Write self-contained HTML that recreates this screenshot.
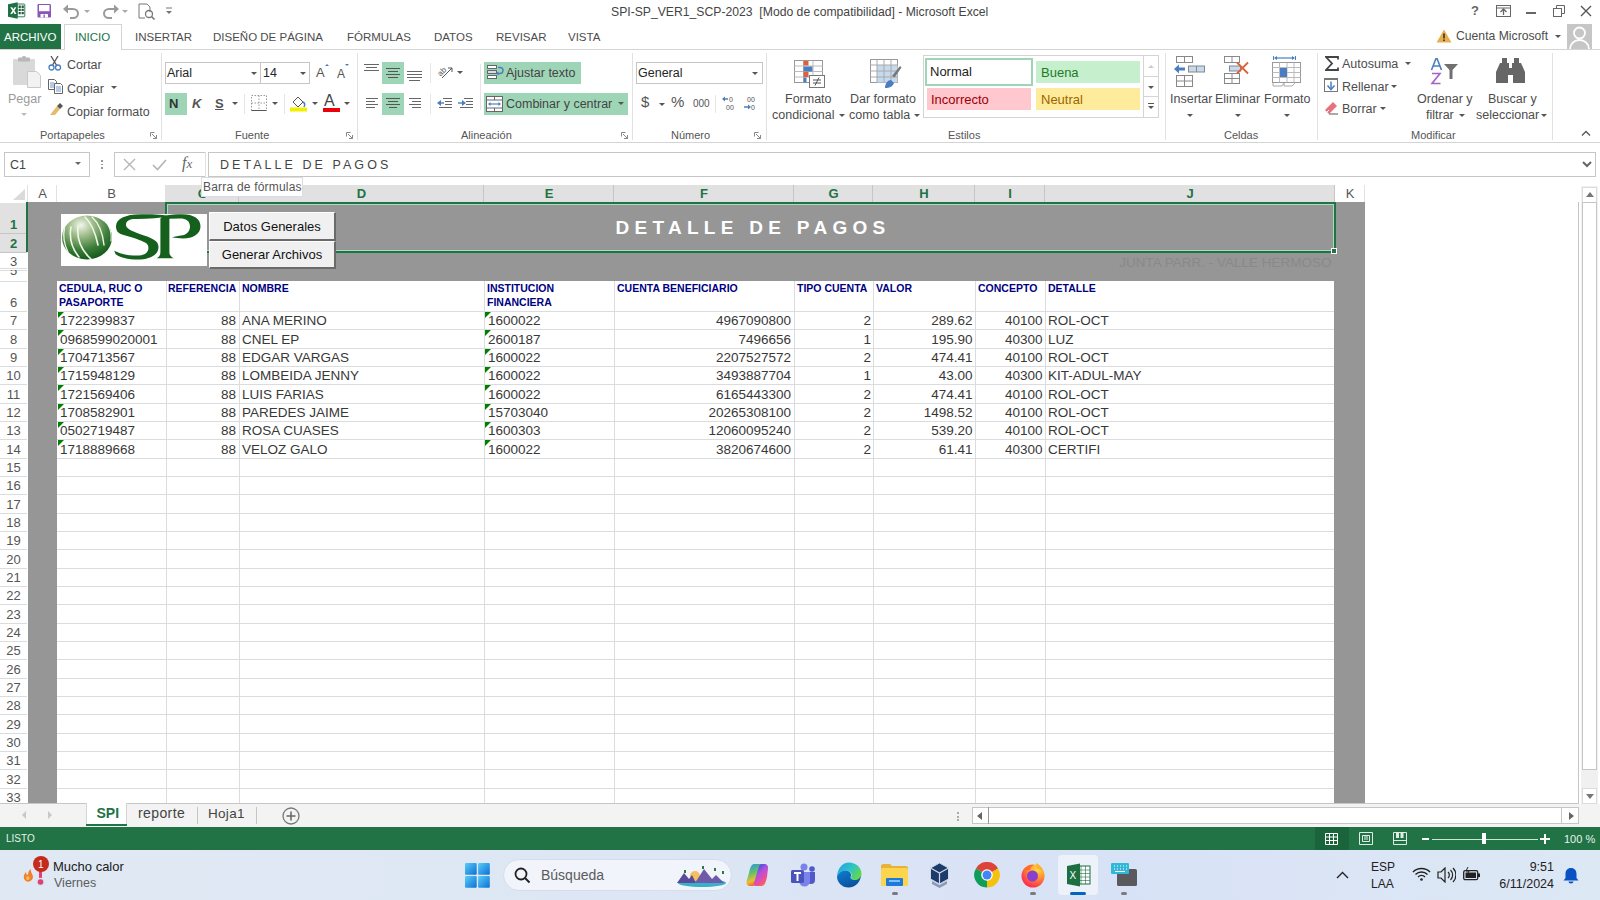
<!DOCTYPE html>
<html><head><meta charset="utf-8">
<style>
*{box-sizing:border-box;margin:0;padding:0}
body{width:1600px;height:900px;overflow:hidden;position:relative;background:#fff;font-family:"Liberation Sans",sans-serif;color:#444}
.a{position:absolute;white-space:nowrap}
.t{position:absolute;white-space:nowrap;font-size:12px;color:#4d4d4d;line-height:14px}
.sep{position:absolute;width:1px;background:#e1e1e1}
.dd{position:absolute;width:0;height:0;border-left:3px solid transparent;border-right:3px solid transparent;border-top:3px solid #555}
.grn{position:absolute;background:#9fd5b7}
</style></head><body>

<!-- ============ TITLE BAR ============ -->
<div id="titlebar" class="a" style="left:0;top:0;width:1600px;height:24px;background:#fff">
  <!-- excel icon -->
  <svg class="a" style="left:8px;top:2px" width="18" height="17" viewBox="0 0 18 17">
    <rect x="9" y="2" width="7.8" height="12.8" rx="0.8" fill="#fff" stroke="#1e7145" stroke-width="0.9"/>
    <path d="M10.6 3.6h2.2v2.3h-2.2zM13.6 3.6h2.2v2.3h-2.2zM10.6 6.8h2.2v2.3h-2.2zM13.6 6.8h2.2v2.3h-2.2zM10.6 10h2.2v2.3h-2.2zM13.6 10h2.2v2.3h-2.2z" fill="#1e5f3a"/>
    <path d="M0 2.2L9.7 0.3V16.7L0 14.8Z" fill="#1e7145"/>
    <path d="M2.3 5.2h1.9l1.2 2.1 1.2-2.1h1.8L6.4 8.6l2.1 3.5H6.6L5.4 9.9 4.1 12.1H2.3l2.1-3.5z" fill="#fff"/>
  </svg>
  <!-- save -->
  <svg class="a" style="left:37px;top:4px" width="15" height="14" viewBox="0 0 15 14">
    <rect x="0.5" y="0" width="13.5" height="13.5" rx="1.2" fill="#8a56b8"/>
    <rect x="2" y="1" width="10.5" height="6.2" fill="#fff"/>
    <rect x="3.5" y="10" width="7.5" height="3.5" rx="0.5" fill="#fff"/>
    <rect x="6.5" y="10.5" width="1.3" height="3" fill="#8a56b8"/>
  </svg>
  <!-- undo -->
  <svg class="a" style="left:63px;top:4px" width="18" height="15" viewBox="0 0 18 15">
    <path d="M3 5h7a5 4.5 0 0 1 0 9H7" fill="none" stroke="#9a9a9a" stroke-width="2"/>
    <path d="M0 5l5-4.5v9z" fill="#9a9a9a"/>
  </svg>
  <div class="dd" style="left:84px;top:10px;border-top-color:#aaa"></div>
  <!-- redo -->
  <svg class="a" style="left:101px;top:4px" width="18" height="15" viewBox="0 0 18 15">
    <path d="M15 5H8a5 4.5 0 0 0 0 9h3" fill="none" stroke="#9a9a9a" stroke-width="2"/>
    <path d="M18 5l-5-4.5v9z" fill="#9a9a9a"/>
  </svg>
  <div class="dd" style="left:122px;top:10px;border-top-color:#aaa"></div>
  <!-- print preview -->
  <svg class="a" style="left:138px;top:3px" width="18" height="17" viewBox="0 0 18 17">
    <path d="M1 1h8l3 3v5M1 1v14h6" fill="none" stroke="#777" stroke-width="1"/>
    <circle cx="11" cy="11" r="3.5" fill="none" stroke="#777" stroke-width="1.3"/>
    <path d="M13.5 13.5l3 3" stroke="#777" stroke-width="1.6"/>
  </svg>
  <svg class="a" style="left:165px;top:7px" width="8" height="9" viewBox="0 0 8 9">
    <path d="M1 1h6" stroke="#777" stroke-width="1"/><path d="M1 4h6L4 7z" fill="#777"/>
  </svg>
  <div class="t" style="left:611px;top:5px;font-size:12.2px;color:#444">SPI-SP_VER1_SCP-2023&nbsp; [Modo de compatibilidad] - Microsoft Excel</div>
  <!-- right controls -->
  <div class="t" style="left:1471px;top:4px;font-size:13px;font-weight:700;color:#666">?</div>
  <svg class="a" style="left:1496px;top:5px" width="15" height="12" viewBox="0 0 15 12">
    <rect x="0.5" y="0.5" width="14" height="11" fill="none" stroke="#666"/>
    <path d="M0.5 3h14" stroke="#666"/>
    <path d="M7.5 4v6M4.5 7l3-3 3 3" fill="none" stroke="#666" stroke-width="1.3"/>
  </svg>
  <div class="a" style="left:1526px;top:12px;width:10px;height:1.5px;background:#666"></div>
  <svg class="a" style="left:1553px;top:5px" width="12" height="12" viewBox="0 0 12 12">
    <rect x="0.5" y="3.5" width="8" height="8" fill="#fff" stroke="#666"/>
    <path d="M3.5 3.5V0.5h8v8h-3" fill="none" stroke="#666"/>
  </svg>
  <svg class="a" style="left:1580px;top:5px" width="12" height="12" viewBox="0 0 12 12">
    <path d="M1 1l10 10M11 1L1 11" stroke="#555" stroke-width="1.4"/>
  </svg>
</div>

<!-- ============ TABS ============ -->
<div id="tabs" class="a" style="left:0;top:24px;width:1600px;height:26px">
  <div class="a" style="left:0;top:0;width:61px;height:25px;background:#217346"></div>
  <div class="t" style="left:4px;top:6px;font-size:11.5px;color:#fff">ARCHIVO</div>
  <div class="a" style="left:64px;top:0;width:58px;height:26px;border:1px solid #d4d4d4;border-bottom:none;background:#fff"></div>
  <div class="t" style="left:75px;top:6px;font-size:11.5px;color:#217346">INICIO</div>
  <div class="t" style="left:135px;top:6px;font-size:11.5px">INSERTAR</div>
  <div class="t" style="left:213px;top:6px;font-size:11.5px">DISEÑO DE PÁGINA</div>
  <div class="t" style="left:347px;top:6px;font-size:11.5px">FÓRMULAS</div>
  <div class="t" style="left:434px;top:6px;font-size:11.5px">DATOS</div>
  <div class="t" style="left:496px;top:6px;font-size:11.5px">REVISAR</div>
  <div class="t" style="left:568px;top:6px;font-size:11.5px">VISTA</div>
  <svg class="a" style="left:1436px;top:5px" width="16" height="14" viewBox="0 0 16 14">
    <path d="M8 0.5L15.5 13.5H0.5Z" fill="#e8b04a"/>
    <rect x="7.2" y="4.5" width="1.6" height="5" fill="#333"/><rect x="7.2" y="10.5" width="1.6" height="1.6" fill="#333"/>
  </svg>
  <div class="t" style="left:1456px;top:5px;font-size:12.2px">Cuenta Microsoft</div>
  <div class="dd" style="left:1555px;top:11px"></div>
  <div class="a" style="left:1567px;top:0;width:25px;height:25px;background:#c6c6c6;overflow:hidden">
    <svg width="25" height="25" viewBox="0 0 25 25"><circle cx="12.5" cy="9" r="5.5" fill="none" stroke="#fff" stroke-width="1.8"/><path d="M3 25a9.5 9 0 0 1 19 0" fill="none" stroke="#fff" stroke-width="1.8"/></svg>
  </div>
  <div class="a" style="left:0;top:25px;width:64px;height:1px;background:#d4d4d4"></div>
  <div class="a" style="left:122px;top:25px;width:1478px;height:1px;background:#d4d4d4"></div>
</div>

<!-- ============ RIBBON ============ -->
<div id="ribbon" class="a" style="left:0;top:0;width:0;height:0">
  <!-- Portapapeles -->
  <svg class="a" style="left:12px;top:56px" width="30" height="32" viewBox="0 0 30 32">
    <rect x="1" y="3" width="22" height="26" fill="#d9d9d9"/>
    <rect x="6" y="1.5" width="12" height="4" rx="1" fill="#b8b8b8"/>
    <rect x="10" y="0" width="4" height="3" rx="1.5" fill="#b8b8b8"/>
    <path d="M15.5 15.5h9l4 4v12h-13z" fill="#f2f2f2" stroke="#c8c8c8"/>
  </svg>
  <div class="t" style="left:8px;top:92px;font-size:12.5px;color:#9a9a9a">Pegar</div>
  <div class="dd" style="left:21px;top:113px;border-top-color:#bbb"></div>
  <svg class="a" style="left:48px;top:56px" width="15" height="15" viewBox="0 0 15 15">
    <path d="M3 0l6 10M10 0L4 10" stroke="#555" stroke-width="1.3"/>
    <circle cx="3.5" cy="11.5" r="2.5" fill="none" stroke="#4a7ec0" stroke-width="1.3"/>
    <circle cx="10" cy="11.5" r="2.5" fill="none" stroke="#4a7ec0" stroke-width="1.3"/>
  </svg>
  <div class="t" style="left:67px;top:58px;font-size:12.5px">Cortar</div>
  <svg class="a" style="left:48px;top:79px" width="15" height="15" viewBox="0 0 15 15">
    <path d="M0.5 0.5h6l2 2v8h-8z" fill="#fff" stroke="#666"/>
    <path d="M2 4h4M2 6h4M2 8h4" stroke="#4a7ec0" stroke-width="0.8"/>
    <path d="M6.5 4.5h6l2 2v8h-8z" fill="#fff" stroke="#666"/>
    <path d="M8 8h5M8 10h5M8 12h5" stroke="#4a7ec0" stroke-width="0.8"/>
  </svg>
  <div class="t" style="left:67px;top:81.5px;font-size:12.5px">Copiar</div>
  <div class="dd" style="left:111px;top:86px"></div>
  <svg class="a" style="left:48px;top:103px" width="15" height="13" viewBox="0 0 15 13">
    <path d="M9 3l3 3-5 6-5 0z" fill="#e3bd6e"/>
    <path d="M9 3l3-3 3 3-3 3z" fill="#555"/>
  </svg>
  <div class="t" style="left:67px;top:105px;font-size:12.5px">Copiar formato</div>
  <div class="t" style="left:40px;top:128px;font-size:11px;color:#555">Portapapeles</div>
  <svg class="a" style="left:150px;top:132px" width="7" height="7" viewBox="0 0 7 7"><path d="M0.5 0.5h4M0.5 0.5v4" stroke="#888"/><path d="M2 2l4.5 4.5M6.5 3v3.5H3" fill="none" stroke="#888"/></svg>
  <div class="sep" style="left:161px;top:53px;height:87px"></div>

  <!-- Fuente -->
  <div class="a" style="left:165px;top:62px;width:96px;height:22px;border:1px solid #c6c6c6;background:#fff"></div>
  <div class="t" style="left:167px;top:66px;font-size:12.5px;color:#262626">Arial</div>
  <div class="dd" style="left:251px;top:72px"></div>
  <div class="a" style="left:260px;top:62px;width:50px;height:22px;border:1px solid #c6c6c6;background:#fff"></div>
  <div class="t" style="left:263px;top:66px;font-size:12.5px;color:#262626">14</div>
  <div class="dd" style="left:300px;top:72px"></div>
  <div class="t" style="left:316px;top:66px;font-size:13px;color:#555">A</div>
  <div class="a" style="left:325px;top:64px;width:0;height:0;border-left:2px solid transparent;border-right:2px solid transparent;border-bottom:2px solid #4a7ec0"></div>
  <div class="t" style="left:337px;top:67px;font-size:12px;color:#555">A</div>
  <div class="a" style="left:345px;top:64px;width:0;height:0;border-left:2px solid transparent;border-right:2px solid transparent;border-top:2px solid #4a7ec0"></div>
  <div class="grn" style="left:165px;top:93px;width:22px;height:22px"></div>
  <div class="t" style="left:169px;top:97px;font-size:13px;font-weight:700;color:#333">N</div>
  <div class="t" style="left:192px;top:97px;font-size:13px;font-weight:700;font-style:italic;color:#555">K</div>
  <div class="t" style="left:215px;top:97px;font-size:13px;font-weight:700;color:#555;text-decoration:underline">S</div>
  <div class="dd" style="left:232px;top:102px"></div>
  <div class="sep" style="left:244px;top:94px;height:20px;background:#e6e6e6"></div>
  <svg class="a" style="left:251px;top:95px" width="16" height="16" viewBox="0 0 16 16">
    <path d="M0.5 0.5h15v15h-15z M8 0.5v15M0.5 8h15" fill="none" stroke="#999" stroke-dasharray="1.5 1.5"/>
    <path d="M0.5 15.5h15" stroke="#555"/>
  </svg>
  <div class="dd" style="left:272px;top:102px"></div>
  <div class="sep" style="left:284px;top:94px;height:20px;background:#e6e6e6"></div>
  <svg class="a" style="left:290px;top:95px" width="19" height="18" viewBox="0 0 19 18">
    <path d="M3 7l5-5 5 5-5 5z" fill="#fff" stroke="#555" stroke-width="1"/>
    <path d="M13 7c2 1 2 3 1 5" fill="none" stroke="#4a7ec0" stroke-width="1.5"/>
    <rect x="0" y="12.5" width="17" height="4" fill="#f2f000"/>
  </svg>
  <div class="dd" style="left:312px;top:102px"></div>
  <div class="t" style="left:324px;top:94px;font-size:16px;color:#444">A</div>
  <div class="a" style="left:323px;top:108px;width:17px;height:4px;background:#e8000b"></div>
  <div class="dd" style="left:344px;top:102px"></div>
  <div class="t" style="left:235px;top:128px;font-size:11px;color:#555">Fuente</div>
  <svg class="a" style="left:346px;top:132px" width="7" height="7" viewBox="0 0 7 7"><path d="M0.5 0.5h4M0.5 0.5v4" stroke="#888"/><path d="M2 2l4.5 4.5M6.5 3v3.5H3" fill="none" stroke="#888"/></svg>
  <div class="sep" style="left:357px;top:53px;height:87px"></div>

  <!-- Alineacion -->
  <svg class="a" style="left:364px;top:64px" width="16" height="9" viewBox="0 0 16 9"><path d="M0 0.5h15M2 3.5h11M0 6.5h15" stroke="#666"/></svg>
  <div class="grn" style="left:382px;top:62px;width:22px;height:22px"></div>
  <svg class="a" style="left:386px;top:67px" width="15" height="11" viewBox="0 0 15 11"><path d="M0 1.5h14M2 4.5h10M0 7.5h14M2 10.5h10" stroke="#555"/></svg>
  <svg class="a" style="left:407px;top:71px" width="16" height="10" viewBox="0 0 16 10"><path d="M0 0.5h15M0 3.5h15M0 6.5h15M2 9.5h11" stroke="#666"/></svg>
  <div class="sep" style="left:430px;top:63px;height:20px;background:#e6e6e6"></div>
  <svg class="a" style="left:436px;top:64px" width="17" height="15" viewBox="0 0 17 15">
    <text x="1" y="10" font-size="8" fill="#555" transform="rotate(-45 6 7)" font-family="Liberation Sans">ab</text>
    <path d="M6 14l10-10M12 4h4v4" fill="none" stroke="#555" stroke-width="1"/>
  </svg>
  <div class="dd" style="left:457px;top:71px"></div>
  <div class="sep" style="left:480px;top:64px;height:46px;background:#e6e6e6"></div>
  <div class="grn" style="left:484px;top:62px;width:97px;height:22px"></div>
  <svg class="a" style="left:487px;top:65px" width="17" height="15" viewBox="0 0 17 15">
    <rect x="0.5" y="0.5" width="9" height="3" fill="#fff" stroke="#666"/>
    <rect x="0.5" y="5.5" width="9" height="3" fill="#cfe0f3" stroke="#666"/>
    <rect x="0.5" y="10.5" width="9" height="3" fill="#fff" stroke="#666"/>
    <path d="M11 2.5h2a3 3 0 0 1 0 6h-3" fill="none" stroke="#4a7ec0" stroke-width="1.4"/>
    <path d="M9 8.5l2.5-2v4z" fill="#4a7ec0"/>
  </svg>
  <div class="t" style="left:506px;top:66px;font-size:12.5px;color:#444">Ajustar texto</div>
  <svg class="a" style="left:366px;top:98px" width="13" height="10" viewBox="0 0 13 10"><path d="M0 0.5h12M0 3.5h9M0 6.5h12M0 9.5h9" stroke="#666"/></svg>
  <div class="grn" style="left:382px;top:93px;width:22px;height:22px"></div>
  <svg class="a" style="left:386px;top:98px" width="15" height="11" viewBox="0 0 15 11"><path d="M0 0.5h14M2 3.5h10M0 6.5h14M3 9.5h8" stroke="#555"/></svg>
  <svg class="a" style="left:409px;top:98px" width="13" height="10" viewBox="0 0 13 10"><path d="M0 0.5h12M3 3.5h9M0 6.5h12M3 9.5h9" stroke="#666"/></svg>
  <div class="sep" style="left:430px;top:94px;height:20px;background:#e6e6e6"></div>
  <svg class="a" style="left:437px;top:98px" width="16" height="10" viewBox="0 0 16 10"><path d="M6 0.5h9M8 3.5h7M8 6.5h7M2 9.5h13" stroke="#666"/><path d="M0 5l4-3v6z" fill="#4a7ec0"/><path d="M3 5h4" stroke="#4a7ec0" stroke-width="1.4"/></svg>
  <svg class="a" style="left:458px;top:98px" width="16" height="10" viewBox="0 0 16 10"><path d="M6 0.5h9M8 3.5h7M8 6.5h7M2 9.5h13" stroke="#666"/><path d="M8 5l-4-3v6z" fill="#4a7ec0"/><path d="M0 5h5" stroke="#4a7ec0" stroke-width="1.4"/></svg>
  <div class="grn" style="left:484px;top:93px;width:144px;height:22px"></div>
  <svg class="a" style="left:486px;top:96px" width="17" height="16" viewBox="0 0 17 16">
    <rect x="0.5" y="0.5" width="16" height="15" fill="#fff" stroke="#666"/>
    <path d="M0.5 4h16M0.5 12h16M8.5 0.5v3.5M8.5 12v3.5" stroke="#666"/>
    <path d="M3 8h11" stroke="#4a7ec0" stroke-width="1.2"/><path d="M2 8l2.5-2v4zM15 8l-2.5-2v4z" fill="#4a7ec0"/>
  </svg>
  <div class="t" style="left:506px;top:97px;font-size:12.5px;color:#444">Combinar y centrar</div>
  <div class="dd" style="left:618px;top:102px"></div>
  <div class="t" style="left:461px;top:128px;font-size:11px;color:#555">Alineación</div>
  <svg class="a" style="left:621px;top:132px" width="7" height="7" viewBox="0 0 7 7"><path d="M0.5 0.5h4M0.5 0.5v4" stroke="#888"/><path d="M2 2l4.5 4.5M6.5 3v3.5H3" fill="none" stroke="#888"/></svg>
  <div class="sep" style="left:632px;top:53px;height:87px"></div>

  <!-- Numero -->
  <div class="a" style="left:636px;top:62px;width:127px;height:22px;border:1px solid #c6c6c6;background:#fff"></div>
  <div class="t" style="left:638px;top:66px;font-size:12.5px;color:#262626">General</div>
  <div class="dd" style="left:752px;top:72px"></div>
  <div class="t" style="left:641px;top:95px;font-size:15px;color:#555">$</div>
  <div class="dd" style="left:659px;top:103px"></div>
  <div class="t" style="left:671px;top:95px;font-size:15px;color:#555">%</div>
  <div class="t" style="left:693px;top:97px;font-size:10px;color:#555">000</div>
  <div class="sep" style="left:715px;top:95px;height:18px;background:#e6e6e6"></div>
  <svg class="a" style="left:722px;top:95px" width="15" height="16" viewBox="0 0 15 16">
    <text x="7" y="7" font-size="7" fill="#555" font-family="Liberation Sans">0</text>
    <text x="4" y="15" font-size="7" fill="#555" font-family="Liberation Sans">00</text>
    <path d="M1 4h5" stroke="#4a7ec0" stroke-width="1.5"/><path d="M0 4l3-2.5v5z" fill="#4a7ec0"/>
  </svg>
  <svg class="a" style="left:743px;top:95px" width="15" height="16" viewBox="0 0 15 16">
    <text x="4" y="7" font-size="7" fill="#555" font-family="Liberation Sans">00</text>
    <text x="8" y="15" font-size="7" fill="#555" font-family="Liberation Sans">0</text>
    <path d="M1 12h5" stroke="#4a7ec0" stroke-width="1.5"/><path d="M8 12l-3-2.5v5z" fill="#4a7ec0"/>
  </svg>
  <div class="t" style="left:671px;top:128px;font-size:11px;color:#555">Número</div>
  <svg class="a" style="left:754px;top:132px" width="7" height="7" viewBox="0 0 7 7"><path d="M0.5 0.5h4M0.5 0.5v4" stroke="#888"/><path d="M2 2l4.5 4.5M6.5 3v3.5H3" fill="none" stroke="#888"/></svg>
  <div class="sep" style="left:766px;top:53px;height:87px"></div>

  <!-- Estilos -->
  <svg class="a" style="left:794px;top:60px" width="32" height="29" viewBox="0 0 32 29">
    <rect x="0.5" y="0.5" width="28" height="22" fill="#fff" stroke="#999"/>
    <path d="M0.5 6h28M0.5 11.5h28M0.5 17h28M9.5 0.5v22M19 0.5v22" stroke="#bbb"/>
    <rect x="9.5" y="1" width="5" height="4.5" fill="#d9623b"/>
    <rect x="9.5" y="6.5" width="9" height="5" fill="#4a7ec0"/>
    <rect x="9.5" y="12" width="5" height="5" fill="#d9623b"/>
    <rect x="9.5" y="17.5" width="3" height="5" fill="#4a7ec0"/>
    <rect x="15.5" y="15.5" width="15" height="12" fill="#fff" stroke="#777"/>
    <path d="M19 20h8M19 23h8M25 17.5l-4 8" stroke="#555" stroke-width="1"/>
  </svg>
  <div class="t" style="left:785px;top:92px;font-size:12.5px">Formato</div>
  <div class="t" style="left:772px;top:108px;font-size:12.5px">condicional</div>
  <div class="dd" style="left:839px;top:114px"></div>
  <svg class="a" style="left:870px;top:59px" width="32" height="30" viewBox="0 0 32 30">
    <rect x="0.5" y="0.5" width="27" height="23" fill="#fff" stroke="#999"/>
    <rect x="7" y="6" width="20.5" height="17.5" fill="#c5d9ef"/>
    <path d="M0.5 6h27M0.5 12h27M0.5 18h27M7 0.5v23M14 0.5v23M21 0.5v23" stroke="#aaa"/>
    <path d="M22 17l8-10 1.5 1.5-7 10z" fill="#777"/>
    <path d="M15 29c0-5 3-8 6-8l3 3c-1 3-4 5-9 5z" fill="#4a7ec0"/>
  </svg>
  <div class="t" style="left:850px;top:92px;font-size:12.5px">Dar formato</div>
  <div class="t" style="left:849px;top:108px;font-size:12.5px">como tabla</div>
  <div class="dd" style="left:914px;top:114px"></div>
  <div class="a" style="left:923px;top:55px;width:236px;height:63px;border:1px solid #d4d4d4;background:#fff"></div>
  <div class="a" style="left:925px;top:58px;width:108px;height:28px;border:2px solid #9fd5b7;background:#fff"></div>
  <div class="t" style="left:930px;top:65px;font-size:13px;color:#222">Normal</div>
  <div class="a" style="left:1036px;top:61px;width:104px;height:22px;background:#c6efce"></div>
  <div class="t" style="left:1041px;top:65.5px;font-size:13px;color:#1e7a28">Buena</div>
  <div class="a" style="left:927px;top:88px;width:104px;height:22px;background:#ffc7ce"></div>
  <div class="t" style="left:931px;top:93px;font-size:13px;color:#9c0006">Incorrecto</div>
  <div class="a" style="left:1036px;top:88px;width:104px;height:22px;background:#ffeb9c"></div>
  <div class="t" style="left:1041px;top:93px;font-size:13px;color:#9c6500">Neutral</div>
  <div class="a" style="left:1143px;top:56px;width:15px;height:61px;border-left:1px solid #d4d4d4"></div>
  <div class="a" style="left:1143px;top:76px;width:15px;height:1px;background:#d4d4d4"></div>
  <div class="a" style="left:1143px;top:96px;width:15px;height:1px;background:#d4d4d4"></div>
  <div class="a" style="left:1148px;top:65px;width:0;height:0;border-left:3px solid transparent;border-right:3px solid transparent;border-bottom:3px solid #ccc"></div>
  <div class="dd" style="left:1148px;top:86px"></div>
  <div class="a" style="left:1148px;top:103px;width:6px;height:1px;background:#555"></div>
  <div class="dd" style="left:1148px;top:106px"></div>
  <div class="t" style="left:948px;top:128px;font-size:11px;color:#555">Estilos</div>
  <div class="sep" style="left:1165px;top:53px;height:87px"></div>

  <!-- Celdas -->
  <svg class="a" style="left:1174px;top:56px" width="32" height="32" viewBox="0 0 32 32">
    <rect x="2.5" y="0.5" width="16" height="6" fill="#fff" stroke="#888"/><path d="M10.5 0.5v6" stroke="#888"/>
    <rect x="2.5" y="19.5" width="16" height="11" fill="#fff" stroke="#888"/><path d="M10.5 19.5v11M2.5 25h16" stroke="#888"/>
    <rect x="14.5" y="10" width="16" height="6" fill="#c5d9ef" stroke="#888"/><path d="M22.5 10v6" stroke="#888"/>
    <path d="M2 13h9" stroke="#4a7ec0" stroke-width="3"/><path d="M0 13l5-4.5v9z" fill="#4a7ec0"/>
  </svg>
  <div class="t" style="left:1170px;top:92px;font-size:12.5px">Insertar</div>
  <div class="dd" style="left:1187px;top:114px"></div>
  <svg class="a" style="left:1222px;top:56px" width="32" height="32" viewBox="0 0 32 32">
    <rect x="2.5" y="0.5" width="15" height="6" fill="#fff" stroke="#888"/><path d="M10 0.5v6" stroke="#888"/>
    <rect x="2.5" y="17.5" width="15" height="10" fill="#fff" stroke="#888"/><path d="M10 17.5v10M2.5 22.5h15" stroke="#888"/>
    <rect x="7.5" y="10" width="11" height="5" fill="#c5d9ef" stroke="#888"/>
    <path d="M15 6.5l11 11M26 6.5l-11 11" stroke="#d9623b" stroke-width="1.8"/>
  </svg>
  <div class="t" style="left:1215px;top:92px;font-size:12.5px">Eliminar</div>
  <div class="dd" style="left:1235px;top:114px"></div>
  <svg class="a" style="left:1272px;top:56px" width="32" height="32" viewBox="0 0 32 32">
    <path d="M1.5 0v4M23.5 0v4" stroke="#4a7ec0"/><path d="M3 2h19" stroke="#4a7ec0" stroke-width="1.2"/><path d="M2 2l3-2v4zM23 2l-3-2v4z" fill="#4a7ec0"/>
    <rect x="0.5" y="6.5" width="28" height="20" fill="#fff" stroke="#999"/>
    <path d="M0.5 11.5h28M0.5 16.5h28M0.5 21.5h28M7.5 6.5v20M15 6.5v20M22 6.5v20" stroke="#bbb"/>
    <rect x="8" y="12" width="7" height="9" fill="#4a7ec0"/>
    <path d="M1 27v3h9l2-3M12 27v3h8l3-3" fill="none" stroke="#aaa"/>
  </svg>
  <div class="t" style="left:1264px;top:92px;font-size:12.5px">Formato</div>
  <div class="dd" style="left:1284px;top:114px"></div>
  <div class="t" style="left:1224px;top:128px;font-size:11px;color:#555">Celdas</div>
  <div class="sep" style="left:1317px;top:53px;height:87px"></div>

  <!-- Modificar -->
  <svg class="a" style="left:1325px;top:56px" width="14" height="15" viewBox="0 0 14 15"><path d="M13 3.5V1H1l6 6.5L1 14h12v-2.5" fill="none" stroke="#444" stroke-width="1.8"/></svg>
  <div class="t" style="left:1342px;top:57px;font-size:12.5px">Autosuma</div>
  <div class="dd" style="left:1405px;top:62px"></div>
  <svg class="a" style="left:1324px;top:78px" width="15" height="15" viewBox="0 0 15 15">
    <rect x="0.5" y="0.5" width="13" height="13" fill="#fff" stroke="#777"/><path d="M0.5 1h13" stroke="#777" stroke-width="2"/>
    <path d="M7 3.5v7" stroke="#4a7ec0" stroke-width="1.5"/><path d="M3.5 7.5l3.5 4 3.5-4" fill="none" stroke="#4a7ec0" stroke-width="1.5"/>
  </svg>
  <div class="t" style="left:1342px;top:80px;font-size:12.5px">Rellenar</div>
  <div class="dd" style="left:1391px;top:85px"></div>
  <svg class="a" style="left:1324px;top:100px" width="15" height="15" viewBox="0 0 15 15">
    <path d="M1 10l8-8 4 4-8 8z" fill="#e8707f"/><path d="M3 12l2-2" stroke="#fff"/>
    <path d="M5 14h9" stroke="#555"/>
  </svg>
  <div class="t" style="left:1342px;top:102px;font-size:12.5px">Borrar</div>
  <div class="dd" style="left:1380px;top:107px"></div>
  <svg class="a" style="left:1430px;top:58px" width="30" height="28" viewBox="0 0 30 28">
    <path d="M1.5 12L6 0.5h1L11.5 12M3.5 8h6" fill="none" stroke="#4a7ec0" stroke-width="1.6"/>
    <path d="M2 15.5h8L2 25.5h8.5" fill="none" stroke="#a660c8" stroke-width="1.6"/>
    <path d="M14 6h14l-5.5 6v9h-3v-9z" fill="#707070"/>
  </svg>
  <div class="t" style="left:1417px;top:92px;font-size:12.5px">Ordenar y</div>
  <div class="t" style="left:1426px;top:108px;font-size:12.5px">filtrar</div>
  <div class="dd" style="left:1459px;top:114px"></div>
  <svg class="a" style="left:1496px;top:58px" width="29" height="26" viewBox="0 0 29 26">
    <rect x="6" y="0" width="5" height="6" fill="#666"/><rect x="18" y="0" width="5" height="6" fill="#666"/>
    <path d="M0 14l4-9h9v5h3v-5h9l4 9v11H17v-8h-5v8H0z" fill="#666"/>
  </svg>
  <div class="t" style="left:1488px;top:92px;font-size:12.5px">Buscar y</div>
  <div class="t" style="left:1476px;top:108px;font-size:12.5px">seleccionar</div>
  <div class="dd" style="left:1541px;top:114px"></div>
  <div class="t" style="left:1411px;top:128px;font-size:11px;color:#555">Modificar</div>
  <div class="sep" style="left:1552px;top:53px;height:87px"></div>
  <svg class="a" style="left:1581px;top:130px" width="10" height="6" viewBox="0 0 10 6"><path d="M1 5.5l4-4 4 4" fill="none" stroke="#555" stroke-width="1.3"/></svg>
</div>
<div class="a" style="left:0;top:142px;width:1600px;height:1px;background:#d4d4d4"></div>

<!-- ============ FORMULA BAR ============ -->
<div id="fbar" class="a" style="left:0;top:0;width:0;height:0">
  <div class="a" style="left:4px;top:152px;width:86px;height:25px;border:1px solid #c6c6c6;background:#fff"></div>
  <div class="t" style="left:10px;top:158px;font-size:12.5px;color:#444">C1</div>
  <div class="dd" style="left:75px;top:162px;border-left-width:3.5px;border-right-width:3.5px;border-top-width:3.5px;border-top-color:#666"></div>
  <div class="a" style="left:101px;top:160px;width:1.5px;height:1.5px;background:#999"></div>
  <div class="a" style="left:101px;top:163.5px;width:1.5px;height:1.5px;background:#999"></div>
  <div class="a" style="left:101px;top:167px;width:1.5px;height:1.5px;background:#999"></div>
  <div class="a" style="left:114px;top:152px;width:92px;height:25px;border:1px solid #c6c6c6;border-right:none;background:#fff"></div>
  <svg class="a" style="left:123px;top:158px" width="13" height="13" viewBox="0 0 13 13"><path d="M1 1l11 11M12 1L1 12" stroke="#b4b4b4" stroke-width="1.3"/></svg>
  <svg class="a" style="left:152px;top:158px" width="15" height="13" viewBox="0 0 15 13"><path d="M1 7l4.5 4.5L14 2" fill="none" stroke="#b4b4b4" stroke-width="1.6"/></svg>
  <div class="a" style="left:182px;top:153px;font-family:'Liberation Serif',serif;font-style:italic;font-size:16px;line-height:20px;color:#666">f<span style="font-size:13px">x</span></div>
  <div class="a" style="left:205px;top:152px;width:1px;height:25px;background:#e1e1e1"></div>
  <div class="a" style="left:208px;top:152px;width:1388px;height:25px;border:1px solid #c6c6c6;background:#fff"></div>
  <div class="t" style="left:220px;top:158px;font-size:12.5px;line-height:15px;color:#444;letter-spacing:3.05px">DETALLE DE PAGOS</div>
  <svg class="a" style="left:1582px;top:161px" width="10" height="7" viewBox="0 0 10 7"><path d="M1 1l4 4 4-4" fill="none" stroke="#666" stroke-width="2"/></svg>
</div>

<!-- ============ GRID ============ -->
<div id="grid" class="a" style="left:0;top:0;width:0;height:0">
<div class="a" style="left:0;top:185px;width:1365px;height:17px;background:#fff"></div>
<div class="a" style="left:166px;top:185px;width:1169px;height:17px;background:#e1e1e1"></div>
<svg class="a" style="left:13px;top:189px" width="12" height="11" viewBox="0 0 12 11"><path d="M12 0V11H0Z" fill="#dadada"/></svg>
<div class="a" style="left:56px;top:185px;width:1px;height:17px;background:#e1e1e1"></div>
<div class="a" style="left:28px;top:187px;width:29px;text-align:center;font-size:13px;line-height:14px;color:#555;font-weight:400">A</div>
<div class="a" style="left:165px;top:185px;width:1px;height:17px;background:#e1e1e1"></div>
<div class="a" style="left:57px;top:187px;width:109px;text-align:center;font-size:13px;line-height:14px;color:#555;font-weight:400">B</div>
<div class="a" style="left:238px;top:185px;width:1px;height:17px;background:#c6c6c6"></div>
<div class="a" style="left:166px;top:187px;width:73px;text-align:center;font-size:13px;line-height:14px;color:#217346;font-weight:700">C</div>
<div class="a" style="left:483px;top:185px;width:1px;height:17px;background:#c6c6c6"></div>
<div class="a" style="left:239px;top:187px;width:245px;text-align:center;font-size:13px;line-height:14px;color:#217346;font-weight:700">D</div>
<div class="a" style="left:613px;top:185px;width:1px;height:17px;background:#c6c6c6"></div>
<div class="a" style="left:484px;top:187px;width:130px;text-align:center;font-size:13px;line-height:14px;color:#217346;font-weight:700">E</div>
<div class="a" style="left:793px;top:185px;width:1px;height:17px;background:#c6c6c6"></div>
<div class="a" style="left:614px;top:187px;width:180px;text-align:center;font-size:13px;line-height:14px;color:#217346;font-weight:700">F</div>
<div class="a" style="left:872px;top:185px;width:1px;height:17px;background:#c6c6c6"></div>
<div class="a" style="left:794px;top:187px;width:79px;text-align:center;font-size:13px;line-height:14px;color:#217346;font-weight:700">G</div>
<div class="a" style="left:974px;top:185px;width:1px;height:17px;background:#c6c6c6"></div>
<div class="a" style="left:873px;top:187px;width:102px;text-align:center;font-size:13px;line-height:14px;color:#217346;font-weight:700">H</div>
<div class="a" style="left:1044px;top:185px;width:1px;height:17px;background:#c6c6c6"></div>
<div class="a" style="left:975px;top:187px;width:70px;text-align:center;font-size:13px;line-height:14px;color:#217346;font-weight:700">I</div>
<div class="a" style="left:1334px;top:185px;width:1px;height:17px;background:#c6c6c6"></div>
<div class="a" style="left:1045px;top:187px;width:290px;text-align:center;font-size:13px;line-height:14px;color:#217346;font-weight:700">J</div>
<div class="a" style="left:1364px;top:185px;width:1px;height:17px;background:#e1e1e1"></div>
<div class="a" style="left:1335px;top:187px;width:30px;text-align:center;font-size:13px;line-height:14px;color:#555;font-weight:400">K</div>
<div class="a" style="left:27px;top:185px;width:1px;height:17px;background:#e1e1e1"></div>
<div class="a" style="left:0;top:203px;width:27px;height:31px;background:#e1e1e1;border-bottom:1px solid #c6c6c6"></div>
<div class="a" style="left:0;top:202px;width:27px;height:31px;overflow:hidden"><div class="a" style="left:0;top:15px;width:27px;height:15px;text-align:center;font-size:13px;line-height:15px;color:#217346;font-weight:700">1</div></div>
<div class="a" style="left:0;top:234px;width:27px;height:19px;background:#e1e1e1;border-bottom:1px solid #c6c6c6"></div>
<div class="a" style="left:0;top:233px;width:27px;height:19px;overflow:hidden"><div class="a" style="left:0;top:3px;width:27px;height:15px;text-align:center;font-size:13px;line-height:15px;color:#217346;font-weight:700">2</div></div>
<div class="a" style="left:0;top:253px;width:27px;height:16px;background:#fff;border-bottom:1px solid #dadcdd"></div>
<div class="a" style="left:0;top:252px;width:27px;height:16px;overflow:hidden"><div class="a" style="left:0;top:2px;width:27px;height:15px;text-align:center;font-size:13px;line-height:15px;color:#555;font-weight:400">3</div></div>
<div class="a" style="left:0;top:269px;width:27px;height:2px;background:#fff;border-bottom:1px solid #dadcdd"></div>
<div class="a" style="left:0;top:271px;width:27px;height:11px;background:#fff;border-bottom:1px solid #dadcdd"></div>
<div class="a" style="left:0;top:270px;width:27px;height:11px;overflow:hidden"><div class="a" style="left:0;top:-7px;width:27px;height:15px;text-align:center;font-size:13px;line-height:15px;color:#555;font-weight:400">5</div></div>
<div class="a" style="left:0;top:282px;width:27px;height:30px;background:#fff;border-bottom:1px solid #dadcdd"></div>
<div class="a" style="left:0;top:281px;width:27px;height:30px;overflow:hidden"><div class="a" style="left:0;top:14px;width:27px;height:15px;text-align:center;font-size:13px;line-height:15px;color:#555;font-weight:400">6</div></div>
<div class="a" style="left:0;top:312px;width:27px;height:18px;background:#fff;border-bottom:1px solid #dadcdd"></div>
<div class="a" style="left:0;top:311px;width:27px;height:18px;overflow:hidden"><div class="a" style="left:0;top:2px;width:27px;height:15px;text-align:center;font-size:13px;line-height:15px;color:#555;font-weight:400">7</div></div>
<div class="a" style="left:0;top:330px;width:27px;height:19px;background:#fff;border-bottom:1px solid #dadcdd"></div>
<div class="a" style="left:0;top:329px;width:27px;height:19px;overflow:hidden"><div class="a" style="left:0;top:3px;width:27px;height:15px;text-align:center;font-size:13px;line-height:15px;color:#555;font-weight:400">8</div></div>
<div class="a" style="left:0;top:349px;width:27px;height:18px;background:#fff;border-bottom:1px solid #dadcdd"></div>
<div class="a" style="left:0;top:348px;width:27px;height:18px;overflow:hidden"><div class="a" style="left:0;top:2px;width:27px;height:15px;text-align:center;font-size:13px;line-height:15px;color:#555;font-weight:400">9</div></div>
<div class="a" style="left:0;top:367px;width:27px;height:18px;background:#fff;border-bottom:1px solid #dadcdd"></div>
<div class="a" style="left:0;top:366px;width:27px;height:18px;overflow:hidden"><div class="a" style="left:0;top:2px;width:27px;height:15px;text-align:center;font-size:13px;line-height:15px;color:#555;font-weight:400">10</div></div>
<div class="a" style="left:0;top:385px;width:27px;height:19px;background:#fff;border-bottom:1px solid #dadcdd"></div>
<div class="a" style="left:0;top:384px;width:27px;height:19px;overflow:hidden"><div class="a" style="left:0;top:3px;width:27px;height:15px;text-align:center;font-size:13px;line-height:15px;color:#555;font-weight:400">11</div></div>
<div class="a" style="left:0;top:404px;width:27px;height:18px;background:#fff;border-bottom:1px solid #dadcdd"></div>
<div class="a" style="left:0;top:403px;width:27px;height:18px;overflow:hidden"><div class="a" style="left:0;top:2px;width:27px;height:15px;text-align:center;font-size:13px;line-height:15px;color:#555;font-weight:400">12</div></div>
<div class="a" style="left:0;top:422px;width:27px;height:18px;background:#fff;border-bottom:1px solid #dadcdd"></div>
<div class="a" style="left:0;top:421px;width:27px;height:18px;overflow:hidden"><div class="a" style="left:0;top:2px;width:27px;height:15px;text-align:center;font-size:13px;line-height:15px;color:#555;font-weight:400">13</div></div>
<div class="a" style="left:0;top:440px;width:27px;height:19px;background:#fff;border-bottom:1px solid #dadcdd"></div>
<div class="a" style="left:0;top:439px;width:27px;height:19px;overflow:hidden"><div class="a" style="left:0;top:3px;width:27px;height:15px;text-align:center;font-size:13px;line-height:15px;color:#555;font-weight:400">14</div></div>
<div class="a" style="left:0;top:459px;width:27px;height:18px;background:#fff;border-bottom:1px solid #dadcdd"></div>
<div class="a" style="left:0;top:458px;width:27px;height:18px;overflow:hidden"><div class="a" style="left:0;top:2px;width:27px;height:15px;text-align:center;font-size:13px;line-height:15px;color:#555;font-weight:400">15</div></div>
<div class="a" style="left:0;top:477px;width:27px;height:18px;background:#fff;border-bottom:1px solid #dadcdd"></div>
<div class="a" style="left:0;top:476px;width:27px;height:18px;overflow:hidden"><div class="a" style="left:0;top:2px;width:27px;height:15px;text-align:center;font-size:13px;line-height:15px;color:#555;font-weight:400">16</div></div>
<div class="a" style="left:0;top:495px;width:27px;height:19px;background:#fff;border-bottom:1px solid #dadcdd"></div>
<div class="a" style="left:0;top:494px;width:27px;height:19px;overflow:hidden"><div class="a" style="left:0;top:3px;width:27px;height:15px;text-align:center;font-size:13px;line-height:15px;color:#555;font-weight:400">17</div></div>
<div class="a" style="left:0;top:514px;width:27px;height:18px;background:#fff;border-bottom:1px solid #dadcdd"></div>
<div class="a" style="left:0;top:513px;width:27px;height:18px;overflow:hidden"><div class="a" style="left:0;top:2px;width:27px;height:15px;text-align:center;font-size:13px;line-height:15px;color:#555;font-weight:400">18</div></div>
<div class="a" style="left:0;top:532px;width:27px;height:18px;background:#fff;border-bottom:1px solid #dadcdd"></div>
<div class="a" style="left:0;top:531px;width:27px;height:18px;overflow:hidden"><div class="a" style="left:0;top:2px;width:27px;height:15px;text-align:center;font-size:13px;line-height:15px;color:#555;font-weight:400">19</div></div>
<div class="a" style="left:0;top:550px;width:27px;height:19px;background:#fff;border-bottom:1px solid #dadcdd"></div>
<div class="a" style="left:0;top:549px;width:27px;height:19px;overflow:hidden"><div class="a" style="left:0;top:3px;width:27px;height:15px;text-align:center;font-size:13px;line-height:15px;color:#555;font-weight:400">20</div></div>
<div class="a" style="left:0;top:569px;width:27px;height:18px;background:#fff;border-bottom:1px solid #dadcdd"></div>
<div class="a" style="left:0;top:568px;width:27px;height:18px;overflow:hidden"><div class="a" style="left:0;top:2px;width:27px;height:15px;text-align:center;font-size:13px;line-height:15px;color:#555;font-weight:400">21</div></div>
<div class="a" style="left:0;top:587px;width:27px;height:18px;background:#fff;border-bottom:1px solid #dadcdd"></div>
<div class="a" style="left:0;top:586px;width:27px;height:18px;overflow:hidden"><div class="a" style="left:0;top:2px;width:27px;height:15px;text-align:center;font-size:13px;line-height:15px;color:#555;font-weight:400">22</div></div>
<div class="a" style="left:0;top:605px;width:27px;height:19px;background:#fff;border-bottom:1px solid #dadcdd"></div>
<div class="a" style="left:0;top:604px;width:27px;height:19px;overflow:hidden"><div class="a" style="left:0;top:3px;width:27px;height:15px;text-align:center;font-size:13px;line-height:15px;color:#555;font-weight:400">23</div></div>
<div class="a" style="left:0;top:624px;width:27px;height:18px;background:#fff;border-bottom:1px solid #dadcdd"></div>
<div class="a" style="left:0;top:623px;width:27px;height:18px;overflow:hidden"><div class="a" style="left:0;top:2px;width:27px;height:15px;text-align:center;font-size:13px;line-height:15px;color:#555;font-weight:400">24</div></div>
<div class="a" style="left:0;top:642px;width:27px;height:18px;background:#fff;border-bottom:1px solid #dadcdd"></div>
<div class="a" style="left:0;top:641px;width:27px;height:18px;overflow:hidden"><div class="a" style="left:0;top:2px;width:27px;height:15px;text-align:center;font-size:13px;line-height:15px;color:#555;font-weight:400">25</div></div>
<div class="a" style="left:0;top:660px;width:27px;height:19px;background:#fff;border-bottom:1px solid #dadcdd"></div>
<div class="a" style="left:0;top:659px;width:27px;height:19px;overflow:hidden"><div class="a" style="left:0;top:3px;width:27px;height:15px;text-align:center;font-size:13px;line-height:15px;color:#555;font-weight:400">26</div></div>
<div class="a" style="left:0;top:679px;width:27px;height:18px;background:#fff;border-bottom:1px solid #dadcdd"></div>
<div class="a" style="left:0;top:678px;width:27px;height:18px;overflow:hidden"><div class="a" style="left:0;top:2px;width:27px;height:15px;text-align:center;font-size:13px;line-height:15px;color:#555;font-weight:400">27</div></div>
<div class="a" style="left:0;top:697px;width:27px;height:18px;background:#fff;border-bottom:1px solid #dadcdd"></div>
<div class="a" style="left:0;top:696px;width:27px;height:18px;overflow:hidden"><div class="a" style="left:0;top:2px;width:27px;height:15px;text-align:center;font-size:13px;line-height:15px;color:#555;font-weight:400">28</div></div>
<div class="a" style="left:0;top:715px;width:27px;height:19px;background:#fff;border-bottom:1px solid #dadcdd"></div>
<div class="a" style="left:0;top:714px;width:27px;height:19px;overflow:hidden"><div class="a" style="left:0;top:3px;width:27px;height:15px;text-align:center;font-size:13px;line-height:15px;color:#555;font-weight:400">29</div></div>
<div class="a" style="left:0;top:734px;width:27px;height:18px;background:#fff;border-bottom:1px solid #dadcdd"></div>
<div class="a" style="left:0;top:733px;width:27px;height:18px;overflow:hidden"><div class="a" style="left:0;top:2px;width:27px;height:15px;text-align:center;font-size:13px;line-height:15px;color:#555;font-weight:400">30</div></div>
<div class="a" style="left:0;top:752px;width:27px;height:18px;background:#fff;border-bottom:1px solid #dadcdd"></div>
<div class="a" style="left:0;top:751px;width:27px;height:18px;overflow:hidden"><div class="a" style="left:0;top:2px;width:27px;height:15px;text-align:center;font-size:13px;line-height:15px;color:#555;font-weight:400">31</div></div>
<div class="a" style="left:0;top:770px;width:27px;height:19px;background:#fff;border-bottom:1px solid #dadcdd"></div>
<div class="a" style="left:0;top:769px;width:27px;height:19px;overflow:hidden"><div class="a" style="left:0;top:3px;width:27px;height:15px;text-align:center;font-size:13px;line-height:15px;color:#555;font-weight:400">32</div></div>
<div class="a" style="left:0;top:789px;width:27px;height:18px;background:#fff;border-bottom:1px solid #dadcdd"></div>
<div class="a" style="left:0;top:788px;width:27px;height:18px;overflow:hidden"><div class="a" style="left:0;top:2px;width:27px;height:15px;text-align:center;font-size:13px;line-height:15px;color:#555;font-weight:400">33</div></div>
<div class="a" style="left:26px;top:202px;width:2px;height:50px;background:#217346"></div>
<div class="a" style="left:28px;top:202px;width:1337px;height:79px;background:#969696"></div>
<div class="a" style="left:28px;top:281px;width:29px;height:522px;background:#969696"></div>
<div class="a" style="left:1334px;top:281px;width:31px;height:522px;background:#969696"></div>
<div class="a" style="left:57px;top:281px;width:1277px;height:522px;background:#fff"></div>
<div class="a" style="left:57px;top:311px;width:1277px;height:1px;background:#dadcdd"></div>
<div class="a" style="left:57px;top:329px;width:1277px;height:1px;background:#dadcdd"></div>
<div class="a" style="left:57px;top:348px;width:1277px;height:1px;background:#dadcdd"></div>
<div class="a" style="left:57px;top:366px;width:1277px;height:1px;background:#dadcdd"></div>
<div class="a" style="left:57px;top:384px;width:1277px;height:1px;background:#dadcdd"></div>
<div class="a" style="left:57px;top:403px;width:1277px;height:1px;background:#dadcdd"></div>
<div class="a" style="left:57px;top:421px;width:1277px;height:1px;background:#dadcdd"></div>
<div class="a" style="left:57px;top:439px;width:1277px;height:1px;background:#dadcdd"></div>
<div class="a" style="left:57px;top:458px;width:1277px;height:1px;background:#dadcdd"></div>
<div class="a" style="left:57px;top:476px;width:1277px;height:1px;background:#dadcdd"></div>
<div class="a" style="left:57px;top:494px;width:1277px;height:1px;background:#dadcdd"></div>
<div class="a" style="left:57px;top:513px;width:1277px;height:1px;background:#dadcdd"></div>
<div class="a" style="left:57px;top:531px;width:1277px;height:1px;background:#dadcdd"></div>
<div class="a" style="left:57px;top:549px;width:1277px;height:1px;background:#dadcdd"></div>
<div class="a" style="left:57px;top:568px;width:1277px;height:1px;background:#dadcdd"></div>
<div class="a" style="left:57px;top:586px;width:1277px;height:1px;background:#dadcdd"></div>
<div class="a" style="left:57px;top:604px;width:1277px;height:1px;background:#dadcdd"></div>
<div class="a" style="left:57px;top:623px;width:1277px;height:1px;background:#dadcdd"></div>
<div class="a" style="left:57px;top:641px;width:1277px;height:1px;background:#dadcdd"></div>
<div class="a" style="left:57px;top:659px;width:1277px;height:1px;background:#dadcdd"></div>
<div class="a" style="left:57px;top:678px;width:1277px;height:1px;background:#dadcdd"></div>
<div class="a" style="left:57px;top:696px;width:1277px;height:1px;background:#dadcdd"></div>
<div class="a" style="left:57px;top:714px;width:1277px;height:1px;background:#dadcdd"></div>
<div class="a" style="left:57px;top:733px;width:1277px;height:1px;background:#dadcdd"></div>
<div class="a" style="left:57px;top:751px;width:1277px;height:1px;background:#dadcdd"></div>
<div class="a" style="left:57px;top:769px;width:1277px;height:1px;background:#dadcdd"></div>
<div class="a" style="left:57px;top:788px;width:1277px;height:1px;background:#dadcdd"></div>
<div class="a" style="left:57px;top:806px;width:1277px;height:1px;background:#dadcdd"></div>
<div class="a" style="left:166px;top:281px;width:1px;height:522px;background:#dadcdd"></div>
<div class="a" style="left:239px;top:281px;width:1px;height:522px;background:#dadcdd"></div>
<div class="a" style="left:484px;top:281px;width:1px;height:522px;background:#dadcdd"></div>
<div class="a" style="left:614px;top:281px;width:1px;height:522px;background:#dadcdd"></div>
<div class="a" style="left:794px;top:281px;width:1px;height:522px;background:#dadcdd"></div>
<div class="a" style="left:873px;top:281px;width:1px;height:522px;background:#dadcdd"></div>
<div class="a" style="left:975px;top:281px;width:1px;height:522px;background:#dadcdd"></div>
<div class="a" style="left:1045px;top:281px;width:1px;height:522px;background:#dadcdd"></div>
</div>
<div id="cells" class="a" style="left:0;top:0;width:0;height:0">
<div class="a" style="left:59px;top:282px;font-size:10.5px;line-height:13.5px;font-weight:700;color:#000080">CEDULA, RUC O<br>PASAPORTE</div>
<div class="a" style="left:168px;top:282px;font-size:10.5px;line-height:13.5px;font-weight:700;color:#000080">REFERENCIA</div>
<div class="a" style="left:242px;top:282px;font-size:10.5px;line-height:13.5px;font-weight:700;color:#000080">NOMBRE</div>
<div class="a" style="left:487px;top:282px;font-size:10.5px;line-height:13.5px;font-weight:700;color:#000080">INSTITUCION<br>FINANCIERA</div>
<div class="a" style="left:617px;top:282px;font-size:10.5px;line-height:13.5px;font-weight:700;color:#000080">CUENTA BENEFICIARIO</div>
<div class="a" style="left:797px;top:282px;font-size:10.5px;line-height:13.5px;font-weight:700;color:#000080">TIPO CUENTA</div>
<div class="a" style="left:876px;top:282px;font-size:10.5px;line-height:13.5px;font-weight:700;color:#000080">VALOR</div>
<div class="a" style="left:978px;top:282px;font-size:10.5px;line-height:13.5px;font-weight:700;color:#000080">CONCEPTO</div>
<div class="a" style="left:1048px;top:282px;font-size:10.5px;line-height:13.5px;font-weight:700;color:#000080">DETALLE</div>
<div class="a" style="left:60px;top:313px;font-size:13.5px;line-height:16px;color:#383838">1722399837</div>
<div class="a" style="left:166px;top:313px;width:70px;text-align:right;font-size:13.5px;line-height:16px;color:#383838">88</div>
<div class="a" style="left:242px;top:313px;font-size:13.5px;line-height:16px;color:#383838">ANA MERINO</div>
<div class="a" style="left:488px;top:313px;font-size:13.5px;line-height:16px;color:#383838">1600022</div>
<div class="a" style="left:614px;top:313px;width:177px;text-align:right;font-size:13.5px;line-height:16px;color:#383838">4967090800</div>
<div class="a" style="left:794px;top:313px;width:77px;text-align:right;font-size:13.5px;line-height:16px;color:#383838">2</div>
<div class="a" style="left:873px;top:313px;width:99.5px;text-align:right;font-size:13.5px;line-height:16px;color:#383838">289.62</div>
<div class="a" style="left:975px;top:313px;width:67.5px;text-align:right;font-size:13.5px;line-height:16px;color:#383838">40100</div>
<div class="a" style="left:1048px;top:313px;font-size:13.5px;line-height:16px;color:#383838">ROL-OCT</div>
<svg class="a" style="left:58px;top:312px" width="6" height="6" viewBox="0 0 6 6"><path d="M0 0H6L0 6Z" fill="#008000"/></svg>
<svg class="a" style="left:485px;top:312px" width="6" height="6" viewBox="0 0 6 6"><path d="M0 0H6L0 6Z" fill="#008000"/></svg>
<div class="a" style="left:60px;top:332px;font-size:13.5px;line-height:16px;color:#383838">0968599020001</div>
<div class="a" style="left:166px;top:332px;width:70px;text-align:right;font-size:13.5px;line-height:16px;color:#383838">88</div>
<div class="a" style="left:242px;top:332px;font-size:13.5px;line-height:16px;color:#383838">CNEL EP</div>
<div class="a" style="left:488px;top:332px;font-size:13.5px;line-height:16px;color:#383838">2600187</div>
<div class="a" style="left:614px;top:332px;width:177px;text-align:right;font-size:13.5px;line-height:16px;color:#383838">7496656</div>
<div class="a" style="left:794px;top:332px;width:77px;text-align:right;font-size:13.5px;line-height:16px;color:#383838">1</div>
<div class="a" style="left:873px;top:332px;width:99.5px;text-align:right;font-size:13.5px;line-height:16px;color:#383838">195.90</div>
<div class="a" style="left:975px;top:332px;width:67.5px;text-align:right;font-size:13.5px;line-height:16px;color:#383838">40300</div>
<div class="a" style="left:1048px;top:332px;font-size:13.5px;line-height:16px;color:#383838">LUZ</div>
<svg class="a" style="left:58px;top:330px" width="6" height="6" viewBox="0 0 6 6"><path d="M0 0H6L0 6Z" fill="#008000"/></svg>
<svg class="a" style="left:485px;top:330px" width="6" height="6" viewBox="0 0 6 6"><path d="M0 0H6L0 6Z" fill="#008000"/></svg>
<div class="a" style="left:60px;top:350px;font-size:13.5px;line-height:16px;color:#383838">1704713567</div>
<div class="a" style="left:166px;top:350px;width:70px;text-align:right;font-size:13.5px;line-height:16px;color:#383838">88</div>
<div class="a" style="left:242px;top:350px;font-size:13.5px;line-height:16px;color:#383838">EDGAR VARGAS</div>
<div class="a" style="left:488px;top:350px;font-size:13.5px;line-height:16px;color:#383838">1600022</div>
<div class="a" style="left:614px;top:350px;width:177px;text-align:right;font-size:13.5px;line-height:16px;color:#383838">2207527572</div>
<div class="a" style="left:794px;top:350px;width:77px;text-align:right;font-size:13.5px;line-height:16px;color:#383838">2</div>
<div class="a" style="left:873px;top:350px;width:99.5px;text-align:right;font-size:13.5px;line-height:16px;color:#383838">474.41</div>
<div class="a" style="left:975px;top:350px;width:67.5px;text-align:right;font-size:13.5px;line-height:16px;color:#383838">40100</div>
<div class="a" style="left:1048px;top:350px;font-size:13.5px;line-height:16px;color:#383838">ROL-OCT</div>
<svg class="a" style="left:58px;top:349px" width="6" height="6" viewBox="0 0 6 6"><path d="M0 0H6L0 6Z" fill="#008000"/></svg>
<svg class="a" style="left:485px;top:349px" width="6" height="6" viewBox="0 0 6 6"><path d="M0 0H6L0 6Z" fill="#008000"/></svg>
<div class="a" style="left:60px;top:368px;font-size:13.5px;line-height:16px;color:#383838">1715948129</div>
<div class="a" style="left:166px;top:368px;width:70px;text-align:right;font-size:13.5px;line-height:16px;color:#383838">88</div>
<div class="a" style="left:242px;top:368px;font-size:13.5px;line-height:16px;color:#383838">LOMBEIDA JENNY</div>
<div class="a" style="left:488px;top:368px;font-size:13.5px;line-height:16px;color:#383838">1600022</div>
<div class="a" style="left:614px;top:368px;width:177px;text-align:right;font-size:13.5px;line-height:16px;color:#383838">3493887704</div>
<div class="a" style="left:794px;top:368px;width:77px;text-align:right;font-size:13.5px;line-height:16px;color:#383838">1</div>
<div class="a" style="left:873px;top:368px;width:99.5px;text-align:right;font-size:13.5px;line-height:16px;color:#383838">43.00</div>
<div class="a" style="left:975px;top:368px;width:67.5px;text-align:right;font-size:13.5px;line-height:16px;color:#383838">40300</div>
<div class="a" style="left:1048px;top:368px;font-size:13.5px;line-height:16px;color:#383838">KIT-ADUL-MAY</div>
<svg class="a" style="left:58px;top:367px" width="6" height="6" viewBox="0 0 6 6"><path d="M0 0H6L0 6Z" fill="#008000"/></svg>
<svg class="a" style="left:485px;top:367px" width="6" height="6" viewBox="0 0 6 6"><path d="M0 0H6L0 6Z" fill="#008000"/></svg>
<div class="a" style="left:60px;top:387px;font-size:13.5px;line-height:16px;color:#383838">1721569406</div>
<div class="a" style="left:166px;top:387px;width:70px;text-align:right;font-size:13.5px;line-height:16px;color:#383838">88</div>
<div class="a" style="left:242px;top:387px;font-size:13.5px;line-height:16px;color:#383838">LUIS FARIAS</div>
<div class="a" style="left:488px;top:387px;font-size:13.5px;line-height:16px;color:#383838">1600022</div>
<div class="a" style="left:614px;top:387px;width:177px;text-align:right;font-size:13.5px;line-height:16px;color:#383838">6165443300</div>
<div class="a" style="left:794px;top:387px;width:77px;text-align:right;font-size:13.5px;line-height:16px;color:#383838">2</div>
<div class="a" style="left:873px;top:387px;width:99.5px;text-align:right;font-size:13.5px;line-height:16px;color:#383838">474.41</div>
<div class="a" style="left:975px;top:387px;width:67.5px;text-align:right;font-size:13.5px;line-height:16px;color:#383838">40100</div>
<div class="a" style="left:1048px;top:387px;font-size:13.5px;line-height:16px;color:#383838">ROL-OCT</div>
<svg class="a" style="left:58px;top:385px" width="6" height="6" viewBox="0 0 6 6"><path d="M0 0H6L0 6Z" fill="#008000"/></svg>
<svg class="a" style="left:485px;top:385px" width="6" height="6" viewBox="0 0 6 6"><path d="M0 0H6L0 6Z" fill="#008000"/></svg>
<div class="a" style="left:60px;top:405px;font-size:13.5px;line-height:16px;color:#383838">1708582901</div>
<div class="a" style="left:166px;top:405px;width:70px;text-align:right;font-size:13.5px;line-height:16px;color:#383838">88</div>
<div class="a" style="left:242px;top:405px;font-size:13.5px;line-height:16px;color:#383838">PAREDES JAIME</div>
<div class="a" style="left:488px;top:405px;font-size:13.5px;line-height:16px;color:#383838">15703040</div>
<div class="a" style="left:614px;top:405px;width:177px;text-align:right;font-size:13.5px;line-height:16px;color:#383838">20265308100</div>
<div class="a" style="left:794px;top:405px;width:77px;text-align:right;font-size:13.5px;line-height:16px;color:#383838">2</div>
<div class="a" style="left:873px;top:405px;width:99.5px;text-align:right;font-size:13.5px;line-height:16px;color:#383838">1498.52</div>
<div class="a" style="left:975px;top:405px;width:67.5px;text-align:right;font-size:13.5px;line-height:16px;color:#383838">40100</div>
<div class="a" style="left:1048px;top:405px;font-size:13.5px;line-height:16px;color:#383838">ROL-OCT</div>
<svg class="a" style="left:58px;top:404px" width="6" height="6" viewBox="0 0 6 6"><path d="M0 0H6L0 6Z" fill="#008000"/></svg>
<svg class="a" style="left:485px;top:404px" width="6" height="6" viewBox="0 0 6 6"><path d="M0 0H6L0 6Z" fill="#008000"/></svg>
<div class="a" style="left:60px;top:423px;font-size:13.5px;line-height:16px;color:#383838">0502719487</div>
<div class="a" style="left:166px;top:423px;width:70px;text-align:right;font-size:13.5px;line-height:16px;color:#383838">88</div>
<div class="a" style="left:242px;top:423px;font-size:13.5px;line-height:16px;color:#383838">ROSA CUASES</div>
<div class="a" style="left:488px;top:423px;font-size:13.5px;line-height:16px;color:#383838">1600303</div>
<div class="a" style="left:614px;top:423px;width:177px;text-align:right;font-size:13.5px;line-height:16px;color:#383838">12060095240</div>
<div class="a" style="left:794px;top:423px;width:77px;text-align:right;font-size:13.5px;line-height:16px;color:#383838">2</div>
<div class="a" style="left:873px;top:423px;width:99.5px;text-align:right;font-size:13.5px;line-height:16px;color:#383838">539.20</div>
<div class="a" style="left:975px;top:423px;width:67.5px;text-align:right;font-size:13.5px;line-height:16px;color:#383838">40100</div>
<div class="a" style="left:1048px;top:423px;font-size:13.5px;line-height:16px;color:#383838">ROL-OCT</div>
<svg class="a" style="left:58px;top:422px" width="6" height="6" viewBox="0 0 6 6"><path d="M0 0H6L0 6Z" fill="#008000"/></svg>
<svg class="a" style="left:485px;top:422px" width="6" height="6" viewBox="0 0 6 6"><path d="M0 0H6L0 6Z" fill="#008000"/></svg>
<div class="a" style="left:60px;top:442px;font-size:13.5px;line-height:16px;color:#383838">1718889668</div>
<div class="a" style="left:166px;top:442px;width:70px;text-align:right;font-size:13.5px;line-height:16px;color:#383838">88</div>
<div class="a" style="left:242px;top:442px;font-size:13.5px;line-height:16px;color:#383838">VELOZ GALO</div>
<div class="a" style="left:488px;top:442px;font-size:13.5px;line-height:16px;color:#383838">1600022</div>
<div class="a" style="left:614px;top:442px;width:177px;text-align:right;font-size:13.5px;line-height:16px;color:#383838">3820674600</div>
<div class="a" style="left:794px;top:442px;width:77px;text-align:right;font-size:13.5px;line-height:16px;color:#383838">2</div>
<div class="a" style="left:873px;top:442px;width:99.5px;text-align:right;font-size:13.5px;line-height:16px;color:#383838">61.41</div>
<div class="a" style="left:975px;top:442px;width:67.5px;text-align:right;font-size:13.5px;line-height:16px;color:#383838">40300</div>
<div class="a" style="left:1048px;top:442px;font-size:13.5px;line-height:16px;color:#383838">CERTIFI</div>
<svg class="a" style="left:58px;top:440px" width="6" height="6" viewBox="0 0 6 6"><path d="M0 0H6L0 6Z" fill="#008000"/></svg>
<svg class="a" style="left:485px;top:440px" width="6" height="6" viewBox="0 0 6 6"><path d="M0 0H6L0 6Z" fill="#008000"/></svg>
<div class="a" style="left:166px;top:217.5px;width:1169px;text-align:center;font-size:19px;line-height:20px;font-weight:700;color:#fff;letter-spacing:5.3px;padding-left:5px">DETALLE DE PAGOS</div>
<div class="a" style="left:1000px;top:254.5px;width:331.5px;text-align:right;font-size:13.5px;line-height:16px;color:#898989">JUNTA PARR. - VALLE HERMOSO</div>
<div class="a" style="left:165px;top:202px;width:1171px;height:51px;border:2px solid #217346"></div>
<div class="a" style="left:167px;top:204px;width:1167px;height:47px;border:1px solid #a8dcc0"></div>
<div class="a" style="left:1331px;top:248px;width:6px;height:6px;background:#217346;border:1px solid #fff"></div>
</div>


<!-- ============ LOGO / BUTTONS / TOOLTIP ============ -->
<div id="overlay" class="a" style="left:0;top:0;width:0;height:0">
  <div class="a" style="left:61px;top:214px;width:146px;height:52px;background:#fff"></div>
  <svg class="a" style="left:61px;top:214px" width="146" height="52" viewBox="0 0 146 52">
    <defs>
      <radialGradient id="gl" cx="0.38" cy="0.22" r="0.85">
        <stop offset="0" stop-color="#f2f6ec"/>
        <stop offset="0.3" stop-color="#9dbb88"/>
        <stop offset="0.65" stop-color="#3d7d3a"/>
        <stop offset="1" stop-color="#0b5316"/>
      </radialGradient>
    </defs>
    <ellipse cx="26" cy="23.5" rx="25" ry="22" fill="url(#gl)"/>
    <g fill="none" stroke="#eef8e6" stroke-linecap="round">
      <path d="M3.5 14Q1 26 7 38" stroke-width="1.3"/>
      <path d="M10 13Q7 30 18 43" stroke-width="1.6"/>
      <path d="M17 12Q15 32 30 45" stroke-width="1.6"/>
      <path d="M24 3Q33 12 37 31" stroke-width="1.6"/>
      <path d="M31 3Q41 12 43 31" stroke-width="1.4"/>
      <path d="M47 11Q51 18 50 27" stroke-width="1.1"/>
    </g>
    <path d="M110 2C98 0.3 90 0.2 80 0.2C64 0.2 55 5 55 12.2C55 17 57 19 61 20.5C70 23 80 26 85 29C87 30.5 87.4 32 87.4 34C87.4 39 83 41.6 76 41.6C67 41.6 60 40 55 37.4L53.2 36.8L54.5 40C58 43.5 67 45.5 77 45.5C89 45.5 97.5 41 97.5 33C97.5 27 92 24.5 83 21.5C73 18 66 15.5 65 11.5C64.6 7 68 5 75 5C88 5 100 4 110 2Z" fill="#16601e"/>
    <path d="M99.4 5.5C99.4 4 100 3 104 2C110 0.3 115 0.2 121 0.2C133 0.2 139.5 5 139.5 12.2C139.5 20 132 24.5 122 24.5C118 24.5 114 24 111 23.3C115 22.5 119 21.5 123 21C127 19.5 129 16 129 12.5C129 7 125 4.4 119 4.4L108.4 4.8L108.4 38C108.4 41 110 43 112.8 44.2L95.6 44.2C98.4 43 99.4 41 99.4 38Z" fill="#16601e"/>
  </svg>
  <div class="a" style="left:209px;top:212px;width:127px;height:29px;background:#f0f0f0;border-top:1px solid #fff;border-left:1px solid #fff;border-right:2px solid #6a6a6a;border-bottom:2px solid #6a6a6a"></div>
  <div class="a" style="left:209px;top:219px;width:126px;text-align:center;font-size:13px;line-height:16px;color:#111">Datos Generales</div>
  <div class="a" style="left:209px;top:241px;width:127px;height:28px;background:#f0f0f0;border-top:1px solid #fff;border-left:1px solid #fff;border-right:2px solid #6a6a6a;border-bottom:2px solid #6a6a6a"></div>
  <div class="a" style="left:209px;top:247px;width:126px;text-align:center;font-size:13px;line-height:16px;color:#111">Generar Archivos</div>
  <div class="a" style="left:201px;top:177px;width:102px;height:20px;background:#fff;border:1px solid #dcdcdc"></div>
  <div class="t" style="left:203px;top:180px;font-size:12px;line-height:15px;color:#555;letter-spacing:0.2px">Barra de fórmulas</div>
</div>

<!-- ============ SCROLLBARS ============ -->
<div id="scroll" class="a" style="left:0;top:0;width:0;height:0">
  <div class="a" style="left:1578px;top:202px;width:1px;height:602px;background:#c6c6c6"></div>
  <div class="a" style="left:0;top:803px;width:1579px;height:1px;background:#c6c6c6"></div>
  <div class="a" style="left:1581px;top:186px;width:17px;height:618px;background:#f0f0f0"></div>
  <div class="a" style="left:1582px;top:187px;width:15px;height:16px;background:#fff;border:1px solid #dcdcdc"></div>
  <div class="a" style="left:1586px;top:192px;width:0;height:0;border-left:4px solid transparent;border-right:4px solid transparent;border-bottom:5px solid #777"></div>
  <div class="a" style="left:1582px;top:202px;width:15px;height:568px;background:#fff;border:1px solid #c6c6c6"></div>
  <div class="a" style="left:1582px;top:788px;width:15px;height:16px;background:#fff;border:1px solid #dcdcdc"></div>
  <div class="a" style="left:1586px;top:794px;width:0;height:0;border-left:4px solid transparent;border-right:4px solid transparent;border-top:5px solid #777"></div>
</div>

<!-- ============ SHEET TABS ============ -->
<div id="sheettabs" class="a" style="left:0;top:804px;width:1600px;height:23px;background:#f3f3f3">
  <div class="a" style="left:22px;top:7px;width:0;height:0;border-top:4px solid transparent;border-bottom:4px solid transparent;border-right:4px solid #c8c8c8"></div>
  <div class="a" style="left:48px;top:7px;width:0;height:0;border-top:4px solid transparent;border-bottom:4px solid transparent;border-left:4px solid #c8c8c8"></div>
  <div class="a" style="left:86px;top:-1px;width:41px;height:22px;background:#fff;border-left:1px solid #d4d4d4;border-right:1px solid #d4d4d4"></div>
  <div class="a" style="left:86px;top:20px;width:41px;height:2px;background:#217346"></div>
  <div class="a" style="left:96.5px;top:0.5px;font-size:14px;line-height:17px;font-weight:700;color:#217346">SPI</div>
  <div class="a" style="left:138px;top:1px;font-size:14px;line-height:17px;color:#444;letter-spacing:0.4px">reporte</div>
  <div class="a" style="left:197px;top:3px;width:1px;height:17px;background:#c6c6c6"></div>
  <div class="a" style="left:208px;top:2px;font-size:13.5px;line-height:16px;color:#444;letter-spacing:0.3px">Hoja1</div>
  <div class="a" style="left:256px;top:3px;width:1px;height:17px;background:#c6c6c6"></div>
  <svg class="a" style="left:282px;top:3px" width="18" height="18" viewBox="0 0 18 18"><circle cx="9" cy="9" r="8" fill="none" stroke="#777" stroke-width="1.3"/><path d="M9 4.5v9M4.5 9h9" stroke="#666" stroke-width="1.5"/></svg>
  <div class="a" style="left:957px;top:8px;width:2px;height:2px;background:#aaa"></div>
  <div class="a" style="left:957px;top:11.5px;width:2px;height:2px;background:#aaa"></div>
  <div class="a" style="left:957px;top:15px;width:2px;height:2px;background:#aaa"></div>
  <div class="a" style="left:972px;top:3px;width:607px;height:17px;background:#fff;border:1px solid #c6c6c6"></div>
  <div class="a" style="left:988px;top:3px;width:1px;height:17px;background:#9a9a9a"></div>
  <div class="a" style="left:1561px;top:3px;width:1px;height:17px;background:#c6c6c6"></div>
  <div class="a" style="left:977px;top:8px;width:0;height:0;border-top:4px solid transparent;border-bottom:4px solid transparent;border-right:5px solid #666"></div>
  <div class="a" style="left:1569px;top:8px;width:0;height:0;border-top:4px solid transparent;border-bottom:4px solid transparent;border-left:5px solid #666"></div>
</div>

<!-- ============ STATUS BAR ============ -->
<div id="status" class="a" style="left:0;top:827px;width:1600px;height:23px;background:#217346">
  <div class="a" style="left:6px;top:5px;font-size:10px;line-height:14px;color:#e6f2ea">LISTO</div>
  <div class="a" style="left:1315px;top:0;width:34px;height:23px;background:#19643b"></div>
  <svg class="a" style="left:1325px;top:6px" width="13" height="12" viewBox="0 0 13 12"><path d="M0.5 0.5h12v11H0.5zM4.5 0.5v11M8.5 0.5v11M0.5 4h12M0.5 7.5h12" fill="none" stroke="#fff"/></svg>
  <svg class="a" style="left:1359px;top:5px" width="14" height="13" viewBox="0 0 14 13"><path d="M0.5 0.5h13v12H0.5z" fill="none" stroke="#dfeee5"/><path d="M3.5 3.5h7v6h-7z M5 5h4M5 7h4" fill="none" stroke="#dfeee5"/></svg>
  <svg class="a" style="left:1393px;top:5px" width="14" height="13" viewBox="0 0 14 13"><path d="M0.5 0.5h13v12H0.5z" fill="none" stroke="#dfeee5"/><rect x="3" y="1" width="3" height="5" fill="#dfeee5"/><rect x="7.5" y="1" width="3" height="5" fill="#dfeee5"/><path d="M1 8.5h12" stroke="#dfeee5"/></svg>
  <div class="a" style="left:1422px;top:11px;width:7px;height:2px;background:#fff"></div>
  <div class="a" style="left:1432px;top:11.5px;width:106px;height:1px;background:#cfe5d7"></div>
  <div class="a" style="left:1482px;top:6px;width:4px;height:11px;background:#fff"></div>
  <div class="a" style="left:1540px;top:11px;width:10px;height:2px;background:#fff"></div>
  <div class="a" style="left:1544px;top:7px;width:2px;height:10px;background:#fff"></div>
  <div class="a" style="left:1564px;top:5px;font-size:11px;line-height:14px;color:#e6f2ea">100 %</div>
</div>

<!-- ============ TASKBAR ============ -->
<div id="taskbar" class="a" style="left:0;top:850px;width:1600px;height:50px;background:linear-gradient(90deg,#e0e9f3 0%,#dde6f4 40%,#d8e2f6 70%,#dde8f5 100%)">
  <!-- weather -->
  <svg class="a" style="left:20px;top:5px" width="32" height="36" viewBox="0 0 32 36">
    <path d="M6 26c-3-2-3-6 0-9 0 2 1 3 2 3 0-3 1-5 3-6-1 3 2 5 2 8 0 3-4 6-7 4z" fill="#f08030"/>
    <path d="M7 25c-1-1-1-3 0-4 1 1 2 1 2 0 1 2 1 4-2 4z" fill="#f8c050"/>
    <rect x="19" y="14" width="3" height="12" rx="1.5" fill="#e0406a"/>
    <circle cx="20.5" cy="27" r="3.5" fill="#e0406a" stroke="#d6dff5" stroke-width="1.5"/>
    <circle cx="21" cy="9" r="8" fill="#c42b1c"/>
    <text x="18" y="13" font-size="10" fill="#fff" font-family="Liberation Sans">1</text>
  </svg>
  <div class="a" style="left:53px;top:9px;font-size:13px;line-height:15px;color:#1b1b1b">Mucho calor</div>
  <div class="a" style="left:54px;top:26px;font-size:12.5px;line-height:15px;color:#5d5d5d">Viernes</div>
  <!-- start -->
  <svg class="a" style="left:465px;top:13px" width="25" height="25" viewBox="0 0 25 25">
    <defs><linearGradient id="wg" x1="0" y1="0" x2="1" y2="1"><stop offset="0" stop-color="#5ccdf6"/><stop offset="1" stop-color="#0a6fd6"/></linearGradient></defs>
    <rect x="0" y="0" width="11.7" height="11.7" rx="1" fill="url(#wg)"/><rect x="13.1" y="0" width="11.7" height="11.7" rx="1" fill="url(#wg)"/>
    <rect x="0" y="13.1" width="11.7" height="11.7" rx="1" fill="url(#wg)"/><rect x="13.1" y="13.1" width="11.7" height="11.7" rx="1" fill="url(#wg)"/>
  </svg>
  <!-- search -->
  <div class="a" style="left:503px;top:9px;width:229px;height:32px;border-radius:16px;background:#f1f4fb;border:1px solid #d7dcea"></div>
  <svg class="a" style="left:514px;top:17px" width="17" height="17" viewBox="0 0 17 17"><circle cx="7" cy="7" r="5.5" fill="none" stroke="#222" stroke-width="1.8"/><path d="M11 11l4.5 4.5" stroke="#222" stroke-width="2"/></svg>
  <div class="a" style="left:541px;top:17px;font-size:14px;line-height:17px;color:#5b5b5b">Búsqueda</div>
  <svg class="a" style="left:675px;top:15px" width="52" height="24" viewBox="0 0 52 24">
    <ellipse cx="27" cy="18" rx="24" ry="4" fill="#38b0c8"/>
    <circle cx="20" cy="11" r="5" fill="#f5c060"/>
    <path d="M2 18l7-10 5 6 3-4 4 8z" fill="#5a4a9a"/>
    <path d="M20 18l9-14 8 10 4-4 8 8z" fill="#6e5aa8"/>
    <path d="M28 4v-3M40 6v-3M48 9v-3M10 8v-3" stroke="#2a7a3a" stroke-width="2"/>
  </svg>
  <!-- copilot -->
  <svg class="a" style="left:745px;top:13px" width="26" height="24" viewBox="0 0 26 24">
    <defs><linearGradient id="cp1" x1="0" y1="0" x2="0.3" y2="1"><stop offset="0" stop-color="#2a8ef0"/><stop offset="0.45" stop-color="#5cc070"/><stop offset="0.8" stop-color="#e8c030"/><stop offset="1" stop-color="#f07030"/></linearGradient>
    <linearGradient id="cp2" x1="0.2" y1="0" x2="0.8" y2="1"><stop offset="0" stop-color="#2050d0"/><stop offset="0.4" stop-color="#b050e0"/><stop offset="0.75" stop-color="#f05090"/><stop offset="1" stop-color="#f08040"/></linearGradient></defs>
    <path d="M9 1h6c2 0 2.5 1.5 2 3L12.5 19c-.8 2.5-2.5 4-5 4H5c-2.5 0-4-2-3.5-4.5L4 10c1-5 2.5-9 5-9z" fill="url(#cp1)"/>
    <path d="M17 1h2.5c2.5 0 4 2 3.5 4.5L22 14c-1 5-2.5 9-5 9h-6c-2 0-2.5-1.5-2-3L13.5 5c.8-2.5 1.5-4 3.5-4z" fill="url(#cp2)"/>
  </svg>
  <!-- teams -->
  <svg class="a" style="left:791px;top:13px" width="25" height="24" viewBox="0 0 25 24">
    <circle cx="13" cy="4" r="3.5" fill="#7b83eb"/><circle cx="21" cy="6" r="2.8" fill="#5059c9"/>
    <path d="M16 9h8v8a4 4 0 0 1-8 0z" fill="#5059c9"/>
    <path d="M8 9h11v9a5.5 5.5 0 0 1-11 0z" fill="#7b83eb"/>
    <rect x="0" y="7" width="13" height="13" rx="1.5" fill="#4b53bc"/>
    <path d="M3 10h7M6.5 10v8" stroke="#fff" stroke-width="2"/>
  </svg>
  <!-- edge -->
  <svg class="a" style="left:836px;top:12px" width="26" height="26" viewBox="0 0 26 26">
    <defs>
      <linearGradient id="eg1" x1="0" y1="0" x2="1" y2="0.6"><stop offset="0" stop-color="#1e9fe6"/><stop offset="0.55" stop-color="#2cc3c8"/><stop offset="1" stop-color="#63d84e"/></linearGradient>
      <linearGradient id="eg2" x1="0" y1="0" x2="0.6" y2="1"><stop offset="0" stop-color="#0f7fd4"/><stop offset="1" stop-color="#0a4f9a"/></linearGradient>
    </defs>
    <path d="M13 0.5C20 0.5 25.5 5.5 25.5 12c0 3.5-2.5 6-6 6-2.5 0-4.5-1-4.5-2.5 0-.8.6-1.2.6-2.5 0-2.5-2.5-4.5-5.5-4.5C5 8.5 2 12 1 14.5 1.5 6.5 6.5.5 13 .5z" fill="url(#eg1)"/>
    <path d="M1 14.5C2 12 5 8.5 9.6 8.5c3 0 5.5 2 5.5 4.5 0 1.3-.6 1.7-.6 2.5 0 1.5 2 2.5 4.5 2.5 3.5 0 6-2.5 6-6 0 8-5.5 13.5-12.5 13.5C6 25.5 1 20.5 1 14.5z" fill="url(#eg2)"/>
    <ellipse cx="10.5" cy="16" rx="4.2" ry="3.6" fill="#dfe7f4" opacity="0.0"/>
  </svg>
  <!-- files -->
  <svg class="a" style="left:881px;top:14px" width="27" height="22" viewBox="0 0 27 22">
    <path d="M0 2c0-1 1-2 2-2h7l2 2h14c1 0 2 1 2 2v16c0 1-1 2-2 2H2c-1 0-2-1-2-2z" fill="#e8b23a"/>
    <rect x="0" y="4" width="27" height="18" rx="1.5" fill="#fbd54e"/>
    <rect x="5" y="14" width="17" height="8" rx="1" fill="#1e7ad8"/>
    <rect x="8" y="16" width="11" height="2" fill="#7cc0f5"/>
  </svg>
  <div class="a" style="left:892px;top:42px;width:6px;height:3px;border-radius:1.5px;background:#7a7a80"></div>
  <!-- virtualbox -->
  <svg class="a" style="left:929px;top:12px" width="21" height="27" viewBox="0 0 21 27">
    <path d="M10.5 1l9 5v11l-9 5-9-5V6z" fill="#1b3c6a" stroke="#d0d8e8" stroke-width="1"/>
    <path d="M1.5 6l9 5 9-5M10.5 11v11" fill="none" stroke="#d0d8e8" stroke-width="1.2"/>
    <path d="M3 19l7.5 4 7.5-4v3l-7.5 4-7.5-4z" fill="#8a9ab8"/>
  </svg>
  <!-- chrome -->
  <svg class="a" style="left:974px;top:12px" width="26" height="26" viewBox="0 0 26 26">
    <path d="M13 13L2 6.5A12.5 12.5 0 0 1 24 6.5z" fill="#db4437"/>
    <path d="M13 13L24 6.5A12.5 12.5 0 0 1 13 25.5z" fill="#f4c20d"/>
    <path d="M13 13L13 25.5A12.5 12.5 0 0 1 2 6.5z" fill="#0f9d58"/>
    <circle cx="13" cy="13" r="5.8" fill="#fff"/><circle cx="13" cy="13" r="4.5" fill="#4285f4"/>
  </svg>
  <!-- firefox -->
  <svg class="a" style="left:1020px;top:12px" width="26" height="26" viewBox="0 0 26 26">
    <defs><radialGradient id="ff" cx="0.7" cy="0.2" r="1"><stop offset="0" stop-color="#ffe040"/><stop offset="0.4" stop-color="#ff9030"/><stop offset="0.8" stop-color="#ff3050"/></radialGradient></defs>
    <circle cx="13" cy="14" r="11.5" fill="url(#ff)"/>
    <circle cx="12.5" cy="14" r="5.5" fill="#8a3fd0"/>
    <path d="M4 8c2-4 6-6 10-5-3 1-4 3-4 5" fill="#ff6a30"/>
    <path d="M16 1c4 2 7 5 8 10-2-3-5-4-7-4z" fill="#ffb030"/>
  </svg>
  <div class="a" style="left:1030px;top:42px;width:6px;height:3px;border-radius:1.5px;background:#7a7a80"></div>
  <!-- excel active -->
  <div class="a" style="left:1058px;top:5px;width:40px;height:40px;border-radius:4px;background:#edf1fa"></div>
  <svg class="a" style="left:1067px;top:13px" width="24" height="24" viewBox="0 0 24 24">
    <rect x="10" y="3" width="13" height="18" fill="#fff" stroke="#1d6f42" stroke-width="1"/>
    <path d="M14 3v18M18.5 3v18M10 7h13M10 10.5h13M10 14h13M10 17.5h13" stroke="#1d6f42" stroke-width="0.6"/>
    <path d="M0 3L13 0.5V23.5L0 21Z" fill="#1d6f42"/>
    <text x="2.5" y="16" font-size="10" fill="#fff" font-family="Liberation Sans">X</text>
  </svg>
  <div class="a" style="left:1070px;top:42px;width:16px;height:3px;border-radius:1.5px;background:#0067c0"></div>
  <!-- keyboard app -->
  <svg class="a" style="left:1111px;top:13px" width="26" height="24" viewBox="0 0 26 24">
    <rect x="6" y="6" width="20" height="17" rx="1.5" fill="#5a5a5e"/>
    <rect x="0" y="0" width="18" height="11" rx="1" fill="#30b8d8"/>
    <path d="M3 3h1M6 3h1M9 3h1M12 3h1M15 3h1M3 6h1M6 6h1M9 6h1M12 6h1M15 6h1M4 8.5h10" stroke="#fff" stroke-width="1.2"/>
  </svg>
  <div class="a" style="left:1121px;top:42px;width:6px;height:3px;border-radius:1.5px;background:#7a7a80"></div>
  <!-- tray -->
  <svg class="a" style="left:1336px;top:21px" width="13" height="8" viewBox="0 0 13 8"><path d="M1 7l5.5-5.5L12 7" fill="none" stroke="#222" stroke-width="1.4"/></svg>
  <div class="a" style="left:1371px;top:10px;font-size:12px;line-height:15px;color:#222">ESP</div>
  <div class="a" style="left:1371px;top:27px;font-size:12px;line-height:15px;color:#222">LAA</div>
  <svg class="a" style="left:1412px;top:17px" width="19" height="14" viewBox="0 0 19 14">
    <path d="M1 5a12 12 0 0 1 17 0M3.5 7.5a8.5 8.5 0 0 1 12 0M6 10a5 5 0 0 1 7 0" fill="none" stroke="#222" stroke-width="1.4"/>
    <circle cx="9.5" cy="12.5" r="1.3" fill="#222"/>
  </svg>
  <svg class="a" style="left:1437px;top:17px" width="19" height="16" viewBox="0 0 19 16">
    <path d="M1 5h3l4-4v14l-4-4H1z" fill="none" stroke="#222" stroke-width="1.2"/>
    <path d="M11 5a4 4 0 0 1 0 6M13.5 3a7 7 0 0 1 0 10M16 1a10 10 0 0 1 0 14" fill="none" stroke="#222" stroke-width="1.2"/>
  </svg>
  <svg class="a" style="left:1463px;top:17px" width="18" height="14" viewBox="0 0 18 14">
    <rect x="0.7" y="3.7" width="14" height="9" rx="1.5" fill="none" stroke="#222" stroke-width="1.3"/>
    <rect x="15" y="6.5" width="2" height="3.5" fill="#222"/>
    <rect x="2.5" y="5.5" width="10.5" height="5.5" fill="#222"/>
    <path d="M5 0L3 4h3L4 8" fill="none" stroke="#222" stroke-width="1"/>
  </svg>
  <div class="a" style="left:1497px;top:10px;width:57px;text-align:right;font-size:12.5px;line-height:15px;color:#222">9:51</div>
  <div class="a" style="left:1490px;top:27px;width:64px;text-align:right;font-size:12.5px;line-height:15px;color:#222">6/11/2024</div>
  <svg class="a" style="left:1563px;top:17px" width="16" height="17" viewBox="0 0 16 17">
    <path d="M8 1c3.5 0 5.5 2.5 5.5 6v4l2 2.5H.5l2-2.5V7c0-3.5 2-6 5.5-6z" fill="#0a52c4"/>
    <path d="M5.5 14.5a2.5 2 0 0 0 5 0z" fill="#0a52c4"/>
  </svg>
</div>

</body></html>
